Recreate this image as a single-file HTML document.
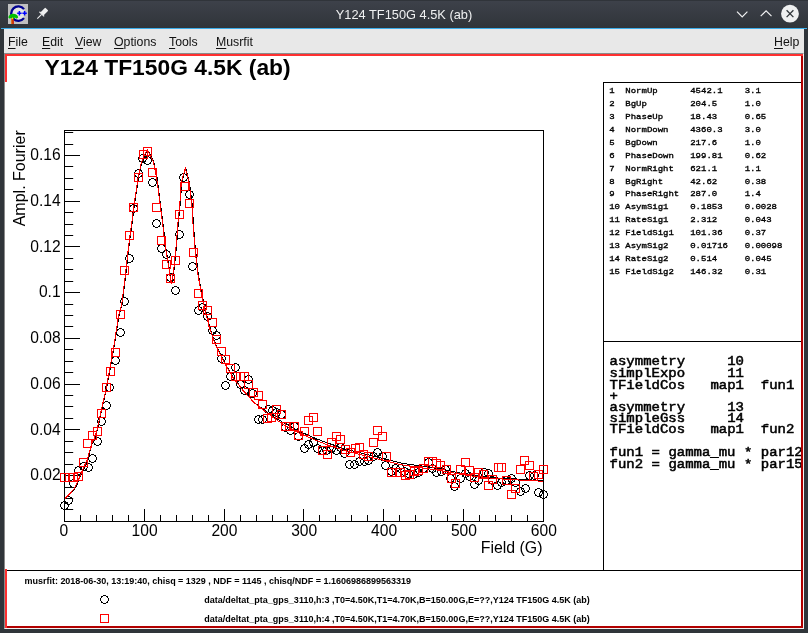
<!DOCTYPE html>
<html lang="en"><head><meta charset="utf-8"><title>Y124 TF150G 4.5K (ab)</title>
<style>
html,body{margin:0;padding:0;}
body{width:808px;height:633px;overflow:hidden;background:#30353a;position:relative;font-family:"Liberation Sans",sans-serif;}
.abs{position:absolute;}
#titlebar{left:0;top:0;width:808px;height:28px;background:linear-gradient(#30343a 0,#30343a 1px,#3d414a 1px,#30353a 27px);}
#titleline{left:1px;top:28px;width:806px;height:1px;background:#3daee9;}
#wtitle{will-change:transform;left:0;top:7px;width:808px;text-align:center;color:#eff0f1;font-size:12.8px;line-height:16px;white-space:nowrap;}
#menubar{left:4px;top:29px;width:800px;height:24px;background:#e8e8e8;}
.mi{will-change:transform;position:absolute;top:34.6px;font-size:12.3px;line-height:14px;color:#111;white-space:nowrap;}
.mi u{text-decoration:underline;text-underline-offset:1.5px;}
#frame{left:4px;top:53px;width:800px;height:576px;background:#fff;box-sizing:border-box;border-left:1px solid #8a8a8a;border-top:1px solid #8a8a8a;border-right:1px solid #f4f4f4;border-bottom:1px solid #f4f4f4;}
.mono{font-family:"Liberation Mono",monospace;font-weight:bold;white-space:pre;color:#000;}
</style></head>
<body>
<div id="titlebar" class="abs"></div><div id="titleline" class="abs"></div>
<div id="wtitle" class="abs">Y124 TF150G 4.5K (ab)</div>
<div id="menubar" class="abs"></div>
<div class="mi" style="left:8.4px"><u>F</u>ile</div><div class="mi" style="left:41.8px"><u>E</u>dit</div><div class="mi" style="left:74.8px"><u>V</u>iew</div><div class="mi" style="left:114.3px"><u>O</u>ptions</div><div class="mi" style="left:168.7px"><u>T</u>ools</div><div class="mi" style="left:215.5px"><u>M</u>usrfit</div><div class="mi" style="left:774.1px"><u>H</u>elp</div>
<div id="frame" class="abs"></div>
<svg class="abs" style="left:0;top:0;will-change:transform" width="808" height="633" viewBox="0 0 808 633" font-family="Liberation Sans, sans-serif">
<rect x="8" y="4" width="20" height="20" fill="#c0c0c0"/>
<circle cx="18.3" cy="13.6" r="6.4" fill="#e4e4e4"/>
<path d="M24 9.1A7.2 7.2 0 1 0 24 18.1" fill="none" stroke="#000090" stroke-width="2.3"/>
<path d="M17.2 13.3h4.4M19.4 11.1v4.4M22.4 13.3h4.4M24.6 11.1v4.4" stroke="#0000ff" stroke-width="1.5" fill="none"/>
<path d="M11.2 18.5h2.2l0.3 5.5h-2.5z" fill="#e06000"/>
<path d="M12.6 18.5h0.9l0.2 5.5h-1.1z" fill="#c00000"/>
<path d="M8.3 17.6c0.3-2.4 2.3-3.8 4.9-3.8c2.6 0 4.7 1.3 5 3.6l-1.6 1.3l-1.7-1.2l-1.6 1.4l-1.8-1.3l-1.6 1.2z" fill="#00c000"/>
<circle cx="12.4" cy="18.4" r="0.8" fill="#ffe000"/>
<g fill="#eff0f1" stroke="none"><rect x="-2.4" y="-6" width="4.8" height="7.4" rx="1" transform="translate(42.9,13.0) rotate(45) scale(0.92)"/><rect x="-3.6" y="1" width="7.2" height="1.3" transform="translate(42.9,13.0) rotate(45) scale(0.92)"/><rect x="-0.6" y="2" width="1.2" height="6.6" transform="translate(42.9,13.0) rotate(45) scale(0.92)"/></g>
<path d="M737 11.6l5.2 5.4l5.2-5.4M760.7 16.2l5.4-5.4l5.4 5.4" fill="none" stroke="#eff0f1" stroke-width="1.2"/>
<circle cx="790" cy="13.7" r="8.9" fill="#eff0f1"/>
<path d="M786.6 10.3l6.8 6.8M793.4 10.3l-6.8 6.8" stroke="#31363b" stroke-width="1.3" fill="none"/>
<rect x="5" y="54" width="798" height="2" fill="#ff3030"/>
<rect x="5" y="54" width="2" height="28" fill="#ff3030"/>
<rect x="5" y="569" width="2" height="59" fill="#ff3030"/>
<rect x="801" y="56" width="2" height="572" fill="#b20000"/>
<rect x="7" y="626" width="796" height="2" fill="#b20000"/>
<g fill="#000">
<rect x="603" y="82" width="198" height="1"/>
<rect x="603" y="82" width="1" height="488"/>
<rect x="603" y="341" width="198" height="1"/>
<rect x="7" y="570" width="794" height="1"/>
</g>
<text x="44.6" y="74.7" font-size="22.8" font-weight="bold" fill="#000" textLength="246" lengthAdjust="spacing">Y124 TF150G 4.5K (ab)</text>
<rect x="64.5" y="130.5" width="479" height="391" fill="none" stroke="#000" stroke-width="1"/>
<path d="M64.50 521V509.00M80.50 521V515.00M96.50 521V515.00M112.50 521V515.00M128.50 521V515.00M144.50 521V509.00M160.50 521V515.00M176.50 521V515.00M192.50 521V515.00M208.50 521V515.00M224.50 521V509.00M240.50 521V515.00M256.50 521V515.00M272.50 521V515.00M287.50 521V515.00M303.50 521V509.00M319.50 521V515.00M335.50 521V515.00M351.50 521V515.00M367.50 521V515.00M383.50 521V509.00M399.50 521V515.00M415.50 521V515.00M431.50 521V515.00M447.50 521V515.00M463.50 521V509.00M479.50 521V515.00M495.50 521V515.00M511.50 521V515.00M527.50 521V515.00M543.50 521V509.00M64.5 509.50H73.20M64.5 498.50H73.20M64.5 487.50H73.20M64.5 475.50H80.00M64.5 464.50H73.20M64.5 452.50H73.20M64.5 441.50H73.20M64.5 429.50H80.00M64.5 418.50H73.20M64.5 406.50H73.20M64.5 395.50H73.20M64.5 384.50H80.00M64.5 372.50H73.20M64.5 361.50H73.20M64.5 349.50H73.20M64.5 338.50H80.00M64.5 326.50H73.20M64.5 315.50H73.20M64.5 304.50H73.20M64.5 292.50H80.00M64.5 281.50H73.20M64.5 269.50H73.20M64.5 258.50H73.20M64.5 246.50H80.00M64.5 235.50H73.20M64.5 224.50H73.20M64.5 212.50H73.20M64.5 201.50H80.00M64.5 189.50H73.20M64.5 178.50H73.20M64.5 166.50H73.20M64.5 155.50H80.00M64.5 144.50H73.20M64.5 132.50H73.20" stroke="#000" stroke-width="1" fill="none"/>
<g font-size="15.6" fill="#000">
<text x="63.8" y="535.6" text-anchor="middle">0</text>
<text x="144.6" y="535.6" text-anchor="middle">100</text>
<text x="224.4" y="535.6" text-anchor="middle">200</text>
<text x="304.2" y="535.6" text-anchor="middle">300</text>
<text x="384.1" y="535.6" text-anchor="middle">400</text>
<text x="463.9" y="535.6" text-anchor="middle">500</text>
<text x="543.8" y="535.6" text-anchor="middle">600</text>
<text x="60.6" y="480.3" text-anchor="end">0.02</text>
<text x="60.6" y="434.6" text-anchor="end">0.04</text>
<text x="60.6" y="388.8" text-anchor="end">0.06</text>
<text x="60.6" y="343.1" text-anchor="end">0.08</text>
<text x="60.6" y="297.4" text-anchor="end">0.1</text>
<text x="60.6" y="251.7" text-anchor="end">0.12</text>
<text x="60.6" y="206.0" text-anchor="end">0.14</text>
<text x="60.6" y="160.2" text-anchor="end">0.16</text>
<text x="542.5" y="552.6" text-anchor="end" font-size="15.9">Field (G)</text>
<text transform="translate(25.4,226.3) rotate(-90)" font-size="16">Ampl. Fourier</text>
</g>
<clipPath id="cpl"><rect x="65" y="131" width="479" height="390"/></clipPath>
<g fill="none" stroke-width="1">
<g fill="#000" stroke="none" shape-rendering="crispEdges">
<path transform="translate(64,505)" d="M-1 -4h3v1h-3zM-3 -3h2v1h-2zM2 -3h2v1h-2zM-3 -2h1v1h-1zM3 -2h1v1h-1zM-4 -1h1v3h-1zM4 -1h1v3h-1zM-3 2h1v1h-1zM3 2h1v1h-1zM-3 3h2v1h-2zM2 3h2v1h-2zM-1 4h3v1h-3z"/>
<path transform="translate(68,500)" d="M-1 -4h3v1h-3zM-3 -3h2v1h-2zM2 -3h2v1h-2zM-3 -2h1v1h-1zM3 -2h1v1h-1zM-4 -1h1v3h-1zM4 -1h1v3h-1zM-3 2h1v1h-1zM3 2h1v1h-1zM-3 3h2v1h-2zM2 3h2v1h-2zM-1 4h3v1h-3z"/>
<path transform="translate(73,483)" d="M-1 -4h3v1h-3zM-3 -3h2v1h-2zM2 -3h2v1h-2zM-3 -2h1v1h-1zM3 -2h1v1h-1zM-4 -1h1v3h-1zM4 -1h1v3h-1zM-3 2h1v1h-1zM3 2h1v1h-1zM-3 3h2v1h-2zM2 3h2v1h-2zM-1 4h3v1h-3z"/>
<path transform="translate(78,470)" d="M-1 -4h3v1h-3zM-3 -3h2v1h-2zM2 -3h2v1h-2zM-3 -2h1v1h-1zM3 -2h1v1h-1zM-4 -1h1v3h-1zM4 -1h1v3h-1zM-3 2h1v1h-1zM3 2h1v1h-1zM-3 3h2v1h-2zM2 3h2v1h-2zM-1 4h3v1h-3z"/>
<path transform="translate(83,466)" d="M-1 -4h3v1h-3zM-3 -3h2v1h-2zM2 -3h2v1h-2zM-3 -2h1v1h-1zM3 -2h1v1h-1zM-4 -1h1v3h-1zM4 -1h1v3h-1zM-3 2h1v1h-1zM3 2h1v1h-1zM-3 3h2v1h-2zM2 3h2v1h-2zM-1 4h3v1h-3z"/>
<path transform="translate(88,467)" d="M-1 -4h3v1h-3zM-3 -3h2v1h-2zM2 -3h2v1h-2zM-3 -2h1v1h-1zM3 -2h1v1h-1zM-4 -1h1v3h-1zM4 -1h1v3h-1zM-3 2h1v1h-1zM3 2h1v1h-1zM-3 3h2v1h-2zM2 3h2v1h-2zM-1 4h3v1h-3z"/>
<path transform="translate(92,458)" d="M-1 -4h3v1h-3zM-3 -3h2v1h-2zM2 -3h2v1h-2zM-3 -2h1v1h-1zM3 -2h1v1h-1zM-4 -1h1v3h-1zM4 -1h1v3h-1zM-3 2h1v1h-1zM3 2h1v1h-1zM-3 3h2v1h-2zM2 3h2v1h-2zM-1 4h3v1h-3z"/>
<path transform="translate(97,441)" d="M-1 -4h3v1h-3zM-3 -3h2v1h-2zM2 -3h2v1h-2zM-3 -2h1v1h-1zM3 -2h1v1h-1zM-4 -1h1v3h-1zM4 -1h1v3h-1zM-3 2h1v1h-1zM3 2h1v1h-1zM-3 3h2v1h-2zM2 3h2v1h-2zM-1 4h3v1h-3z"/>
<path transform="translate(101,421)" d="M-1 -4h3v1h-3zM-3 -3h2v1h-2zM2 -3h2v1h-2zM-3 -2h1v1h-1zM3 -2h1v1h-1zM-4 -1h1v3h-1zM4 -1h1v3h-1zM-3 2h1v1h-1zM3 2h1v1h-1zM-3 3h2v1h-2zM2 3h2v1h-2zM-1 4h3v1h-3z"/>
<path transform="translate(106,405)" d="M-1 -4h3v1h-3zM-3 -3h2v1h-2zM2 -3h2v1h-2zM-3 -2h1v1h-1zM3 -2h1v1h-1zM-4 -1h1v3h-1zM4 -1h1v3h-1zM-3 2h1v1h-1zM3 2h1v1h-1zM-3 3h2v1h-2zM2 3h2v1h-2zM-1 4h3v1h-3z"/>
<path transform="translate(109,387)" d="M-1 -4h3v1h-3zM-3 -3h2v1h-2zM2 -3h2v1h-2zM-3 -2h1v1h-1zM3 -2h1v1h-1zM-4 -1h1v3h-1zM4 -1h1v3h-1zM-3 2h1v1h-1zM3 2h1v1h-1zM-3 3h2v1h-2zM2 3h2v1h-2zM-1 4h3v1h-3z"/>
<path transform="translate(115,360)" d="M-1 -4h3v1h-3zM-3 -3h2v1h-2zM2 -3h2v1h-2zM-3 -2h1v1h-1zM3 -2h1v1h-1zM-4 -1h1v3h-1zM4 -1h1v3h-1zM-3 2h1v1h-1zM3 2h1v1h-1zM-3 3h2v1h-2zM2 3h2v1h-2zM-1 4h3v1h-3z"/>
<path transform="translate(120,332)" d="M-1 -4h3v1h-3zM-3 -3h2v1h-2zM2 -3h2v1h-2zM-3 -2h1v1h-1zM3 -2h1v1h-1zM-4 -1h1v3h-1zM4 -1h1v3h-1zM-3 2h1v1h-1zM3 2h1v1h-1zM-3 3h2v1h-2zM2 3h2v1h-2zM-1 4h3v1h-3z"/>
<path transform="translate(124,301)" d="M-1 -4h3v1h-3zM-3 -3h2v1h-2zM2 -3h2v1h-2zM-3 -2h1v1h-1zM3 -2h1v1h-1zM-4 -1h1v3h-1zM4 -1h1v3h-1zM-3 2h1v1h-1zM3 2h1v1h-1zM-3 3h2v1h-2zM2 3h2v1h-2zM-1 4h3v1h-3z"/>
<path transform="translate(129,258)" d="M-1 -4h3v1h-3zM-3 -3h2v1h-2zM2 -3h2v1h-2zM-3 -2h1v1h-1zM3 -2h1v1h-1zM-4 -1h1v3h-1zM4 -1h1v3h-1zM-3 2h1v1h-1zM3 2h1v1h-1zM-3 3h2v1h-2zM2 3h2v1h-2zM-1 4h3v1h-3z"/>
<path transform="translate(133,208)" d="M-1 -4h3v1h-3zM-3 -3h2v1h-2zM2 -3h2v1h-2zM-3 -2h1v1h-1zM3 -2h1v1h-1zM-4 -1h1v3h-1zM4 -1h1v3h-1zM-3 2h1v1h-1zM3 2h1v1h-1zM-3 3h2v1h-2zM2 3h2v1h-2zM-1 4h3v1h-3z"/>
<path transform="translate(138,173)" d="M-1 -4h3v1h-3zM-3 -3h2v1h-2zM2 -3h2v1h-2zM-3 -2h1v1h-1zM3 -2h1v1h-1zM-4 -1h1v3h-1zM4 -1h1v3h-1zM-3 2h1v1h-1zM3 2h1v1h-1zM-3 3h2v1h-2zM2 3h2v1h-2zM-1 4h3v1h-3z"/>
<path transform="translate(142,158)" d="M-1 -4h3v1h-3zM-3 -3h2v1h-2zM2 -3h2v1h-2zM-3 -2h1v1h-1zM3 -2h1v1h-1zM-4 -1h1v3h-1zM4 -1h1v3h-1zM-3 2h1v1h-1zM3 2h1v1h-1zM-3 3h2v1h-2zM2 3h2v1h-2zM-1 4h3v1h-3z"/>
<path transform="translate(147,160)" d="M-1 -4h3v1h-3zM-3 -3h2v1h-2zM2 -3h2v1h-2zM-3 -2h1v1h-1zM3 -2h1v1h-1zM-4 -1h1v3h-1zM4 -1h1v3h-1zM-3 2h1v1h-1zM3 2h1v1h-1zM-3 3h2v1h-2zM2 3h2v1h-2zM-1 4h3v1h-3z"/>
<path transform="translate(152,182)" d="M-1 -4h3v1h-3zM-3 -3h2v1h-2zM2 -3h2v1h-2zM-3 -2h1v1h-1zM3 -2h1v1h-1zM-4 -1h1v3h-1zM4 -1h1v3h-1zM-3 2h1v1h-1zM3 2h1v1h-1zM-3 3h2v1h-2zM2 3h2v1h-2zM-1 4h3v1h-3z"/>
<path transform="translate(156,223)" d="M-1 -4h3v1h-3zM-3 -3h2v1h-2zM2 -3h2v1h-2zM-3 -2h1v1h-1zM3 -2h1v1h-1zM-4 -1h1v3h-1zM4 -1h1v3h-1zM-3 2h1v1h-1zM3 2h1v1h-1zM-3 3h2v1h-2zM2 3h2v1h-2zM-1 4h3v1h-3z"/>
<path transform="translate(161,248)" d="M-1 -4h3v1h-3zM-3 -3h2v1h-2zM2 -3h2v1h-2zM-3 -2h1v1h-1zM3 -2h1v1h-1zM-4 -1h1v3h-1zM4 -1h1v3h-1zM-3 2h1v1h-1zM3 2h1v1h-1zM-3 3h2v1h-2zM2 3h2v1h-2zM-1 4h3v1h-3z"/>
<path transform="translate(166,254)" d="M-1 -4h3v1h-3zM-3 -3h2v1h-2zM2 -3h2v1h-2zM-3 -2h1v1h-1zM3 -2h1v1h-1zM-4 -1h1v3h-1zM4 -1h1v3h-1zM-3 2h1v1h-1zM3 2h1v1h-1zM-3 3h2v1h-2zM2 3h2v1h-2zM-1 4h3v1h-3z"/>
<path transform="translate(170,277)" d="M-1 -4h3v1h-3zM-3 -3h2v1h-2zM2 -3h2v1h-2zM-3 -2h1v1h-1zM3 -2h1v1h-1zM-4 -1h1v3h-1zM4 -1h1v3h-1zM-3 2h1v1h-1zM3 2h1v1h-1zM-3 3h2v1h-2zM2 3h2v1h-2zM-1 4h3v1h-3z"/>
<path transform="translate(175,290)" d="M-1 -4h3v1h-3zM-3 -3h2v1h-2zM2 -3h2v1h-2zM-3 -2h1v1h-1zM3 -2h1v1h-1zM-4 -1h1v3h-1zM4 -1h1v3h-1zM-3 2h1v1h-1zM3 2h1v1h-1zM-3 3h2v1h-2zM2 3h2v1h-2zM-1 4h3v1h-3z"/>
<path transform="translate(179,234)" d="M-1 -4h3v1h-3zM-3 -3h2v1h-2zM2 -3h2v1h-2zM-3 -2h1v1h-1zM3 -2h1v1h-1zM-4 -1h1v3h-1zM4 -1h1v3h-1zM-3 2h1v1h-1zM3 2h1v1h-1zM-3 3h2v1h-2zM2 3h2v1h-2zM-1 4h3v1h-3z"/>
<path transform="translate(183,177)" d="M-1 -4h3v1h-3zM-3 -3h2v1h-2zM2 -3h2v1h-2zM-3 -2h1v1h-1zM3 -2h1v1h-1zM-4 -1h1v3h-1zM4 -1h1v3h-1zM-3 2h1v1h-1zM3 2h1v1h-1zM-3 3h2v1h-2zM2 3h2v1h-2zM-1 4h3v1h-3z"/>
<path transform="translate(189,194)" d="M-1 -4h3v1h-3zM-3 -3h2v1h-2zM2 -3h2v1h-2zM-3 -2h1v1h-1zM3 -2h1v1h-1zM-4 -1h1v3h-1zM4 -1h1v3h-1zM-3 2h1v1h-1zM3 2h1v1h-1zM-3 3h2v1h-2zM2 3h2v1h-2zM-1 4h3v1h-3z"/>
<path transform="translate(192,266)" d="M-1 -4h3v1h-3zM-3 -3h2v1h-2zM2 -3h2v1h-2zM-3 -2h1v1h-1zM3 -2h1v1h-1zM-4 -1h1v3h-1zM4 -1h1v3h-1zM-3 2h1v1h-1zM3 2h1v1h-1zM-3 3h2v1h-2zM2 3h2v1h-2zM-1 4h3v1h-3z"/>
<path transform="translate(198,310)" d="M-1 -4h3v1h-3zM-3 -3h2v1h-2zM2 -3h2v1h-2zM-3 -2h1v1h-1zM3 -2h1v1h-1zM-4 -1h1v3h-1zM4 -1h1v3h-1zM-3 2h1v1h-1zM3 2h1v1h-1zM-3 3h2v1h-2zM2 3h2v1h-2zM-1 4h3v1h-3z"/>
<path transform="translate(202,307)" d="M-1 -4h3v1h-3zM-3 -3h2v1h-2zM2 -3h2v1h-2zM-3 -2h1v1h-1zM3 -2h1v1h-1zM-4 -1h1v3h-1zM4 -1h1v3h-1zM-3 2h1v1h-1zM3 2h1v1h-1zM-3 3h2v1h-2zM2 3h2v1h-2zM-1 4h3v1h-3z"/>
<path transform="translate(207,316)" d="M-1 -4h3v1h-3zM-3 -3h2v1h-2zM2 -3h2v1h-2zM-3 -2h1v1h-1zM3 -2h1v1h-1zM-4 -1h1v3h-1zM4 -1h1v3h-1zM-3 2h1v1h-1zM3 2h1v1h-1zM-3 3h2v1h-2zM2 3h2v1h-2zM-1 4h3v1h-3z"/>
<path transform="translate(212,330)" d="M-1 -4h3v1h-3zM-3 -3h2v1h-2zM2 -3h2v1h-2zM-3 -2h1v1h-1zM3 -2h1v1h-1zM-4 -1h1v3h-1zM4 -1h1v3h-1zM-3 2h1v1h-1zM3 2h1v1h-1zM-3 3h2v1h-2zM2 3h2v1h-2zM-1 4h3v1h-3z"/>
<path transform="translate(216,335)" d="M-1 -4h3v1h-3zM-3 -3h2v1h-2zM2 -3h2v1h-2zM-3 -2h1v1h-1zM3 -2h1v1h-1zM-4 -1h1v3h-1zM4 -1h1v3h-1zM-3 2h1v1h-1zM3 2h1v1h-1zM-3 3h2v1h-2zM2 3h2v1h-2zM-1 4h3v1h-3z"/>
<path transform="translate(221,358)" d="M-1 -4h3v1h-3zM-3 -3h2v1h-2zM2 -3h2v1h-2zM-3 -2h1v1h-1zM3 -2h1v1h-1zM-4 -1h1v3h-1zM4 -1h1v3h-1zM-3 2h1v1h-1zM3 2h1v1h-1zM-3 3h2v1h-2zM2 3h2v1h-2zM-1 4h3v1h-3z"/>
<path transform="translate(225,385)" d="M-1 -4h3v1h-3zM-3 -3h2v1h-2zM2 -3h2v1h-2zM-3 -2h1v1h-1zM3 -2h1v1h-1zM-4 -1h1v3h-1zM4 -1h1v3h-1zM-3 2h1v1h-1zM3 2h1v1h-1zM-3 3h2v1h-2zM2 3h2v1h-2zM-1 4h3v1h-3z"/>
<path transform="translate(230,376)" d="M-1 -4h3v1h-3zM-3 -3h2v1h-2zM2 -3h2v1h-2zM-3 -2h1v1h-1zM3 -2h1v1h-1zM-4 -1h1v3h-1zM4 -1h1v3h-1zM-3 2h1v1h-1zM3 2h1v1h-1zM-3 3h2v1h-2zM2 3h2v1h-2zM-1 4h3v1h-3z"/>
<path transform="translate(235,367)" d="M-1 -4h3v1h-3zM-3 -3h2v1h-2zM2 -3h2v1h-2zM-3 -2h1v1h-1zM3 -2h1v1h-1zM-4 -1h1v3h-1zM4 -1h1v3h-1zM-3 2h1v1h-1zM3 2h1v1h-1zM-3 3h2v1h-2zM2 3h2v1h-2zM-1 4h3v1h-3z"/>
<path transform="translate(240,384)" d="M-1 -4h3v1h-3zM-3 -3h2v1h-2zM2 -3h2v1h-2zM-3 -2h1v1h-1zM3 -2h1v1h-1zM-4 -1h1v3h-1zM4 -1h1v3h-1zM-3 2h1v1h-1zM3 2h1v1h-1zM-3 3h2v1h-2zM2 3h2v1h-2zM-1 4h3v1h-3z"/>
<path transform="translate(244,390)" d="M-1 -4h3v1h-3zM-3 -3h2v1h-2zM2 -3h2v1h-2zM-3 -2h1v1h-1zM3 -2h1v1h-1zM-4 -1h1v3h-1zM4 -1h1v3h-1zM-3 2h1v1h-1zM3 2h1v1h-1zM-3 3h2v1h-2zM2 3h2v1h-2zM-1 4h3v1h-3z"/>
<path transform="translate(248,379)" d="M-1 -4h3v1h-3zM-3 -3h2v1h-2zM2 -3h2v1h-2zM-3 -2h1v1h-1zM3 -2h1v1h-1zM-4 -1h1v3h-1zM4 -1h1v3h-1zM-3 2h1v1h-1zM3 2h1v1h-1zM-3 3h2v1h-2zM2 3h2v1h-2zM-1 4h3v1h-3z"/>
<path transform="translate(252,393)" d="M-1 -4h3v1h-3zM-3 -3h2v1h-2zM2 -3h2v1h-2zM-3 -2h1v1h-1zM3 -2h1v1h-1zM-4 -1h1v3h-1zM4 -1h1v3h-1zM-3 2h1v1h-1zM3 2h1v1h-1zM-3 3h2v1h-2zM2 3h2v1h-2zM-1 4h3v1h-3z"/>
<path transform="translate(258,419)" d="M-1 -4h3v1h-3zM-3 -3h2v1h-2zM2 -3h2v1h-2zM-3 -2h1v1h-1zM3 -2h1v1h-1zM-4 -1h1v3h-1zM4 -1h1v3h-1zM-3 2h1v1h-1zM3 2h1v1h-1zM-3 3h2v1h-2zM2 3h2v1h-2zM-1 4h3v1h-3z"/>
<path transform="translate(262,419)" d="M-1 -4h3v1h-3zM-3 -3h2v1h-2zM2 -3h2v1h-2zM-3 -2h1v1h-1zM3 -2h1v1h-1zM-4 -1h1v3h-1zM4 -1h1v3h-1zM-3 2h1v1h-1zM3 2h1v1h-1zM-3 3h2v1h-2zM2 3h2v1h-2zM-1 4h3v1h-3z"/>
<path transform="translate(268,409)" d="M-1 -4h3v1h-3zM-3 -3h2v1h-2zM2 -3h2v1h-2zM-3 -2h1v1h-1zM3 -2h1v1h-1zM-4 -1h1v3h-1zM4 -1h1v3h-1zM-3 2h1v1h-1zM3 2h1v1h-1zM-3 3h2v1h-2zM2 3h2v1h-2zM-1 4h3v1h-3z"/>
<path transform="translate(272,410)" d="M-1 -4h3v1h-3zM-3 -3h2v1h-2zM2 -3h2v1h-2zM-3 -2h1v1h-1zM3 -2h1v1h-1zM-4 -1h1v3h-1zM4 -1h1v3h-1zM-3 2h1v1h-1zM3 2h1v1h-1zM-3 3h2v1h-2zM2 3h2v1h-2zM-1 4h3v1h-3z"/>
<path transform="translate(276,412)" d="M-1 -4h3v1h-3zM-3 -3h2v1h-2zM2 -3h2v1h-2zM-3 -2h1v1h-1zM3 -2h1v1h-1zM-4 -1h1v3h-1zM4 -1h1v3h-1zM-3 2h1v1h-1zM3 2h1v1h-1zM-3 3h2v1h-2zM2 3h2v1h-2zM-1 4h3v1h-3z"/>
<path transform="translate(281,414)" d="M-1 -4h3v1h-3zM-3 -3h2v1h-2zM2 -3h2v1h-2zM-3 -2h1v1h-1zM3 -2h1v1h-1zM-4 -1h1v3h-1zM4 -1h1v3h-1zM-3 2h1v1h-1zM3 2h1v1h-1zM-3 3h2v1h-2zM2 3h2v1h-2zM-1 4h3v1h-3z"/>
<path transform="translate(285,427)" d="M-1 -4h3v1h-3zM-3 -3h2v1h-2zM2 -3h2v1h-2zM-3 -2h1v1h-1zM3 -2h1v1h-1zM-4 -1h1v3h-1zM4 -1h1v3h-1zM-3 2h1v1h-1zM3 2h1v1h-1zM-3 3h2v1h-2zM2 3h2v1h-2zM-1 4h3v1h-3z"/>
<path transform="translate(290,430)" d="M-1 -4h3v1h-3zM-3 -3h2v1h-2zM2 -3h2v1h-2zM-3 -2h1v1h-1zM3 -2h1v1h-1zM-4 -1h1v3h-1zM4 -1h1v3h-1zM-3 2h1v1h-1zM3 2h1v1h-1zM-3 3h2v1h-2zM2 3h2v1h-2zM-1 4h3v1h-3z"/>
<path transform="translate(294,426)" d="M-1 -4h3v1h-3zM-3 -3h2v1h-2zM2 -3h2v1h-2zM-3 -2h1v1h-1zM3 -2h1v1h-1zM-4 -1h1v3h-1zM4 -1h1v3h-1zM-3 2h1v1h-1zM3 2h1v1h-1zM-3 3h2v1h-2zM2 3h2v1h-2zM-1 4h3v1h-3z"/>
<path transform="translate(298,436)" d="M-1 -4h3v1h-3zM-3 -3h2v1h-2zM2 -3h2v1h-2zM-3 -2h1v1h-1zM3 -2h1v1h-1zM-4 -1h1v3h-1zM4 -1h1v3h-1zM-3 2h1v1h-1zM3 2h1v1h-1zM-3 3h2v1h-2zM2 3h2v1h-2zM-1 4h3v1h-3z"/>
<path transform="translate(304,448)" d="M-1 -4h3v1h-3zM-3 -3h2v1h-2zM2 -3h2v1h-2zM-3 -2h1v1h-1zM3 -2h1v1h-1zM-4 -1h1v3h-1zM4 -1h1v3h-1zM-3 2h1v1h-1zM3 2h1v1h-1zM-3 3h2v1h-2zM2 3h2v1h-2zM-1 4h3v1h-3z"/>
<path transform="translate(308,444)" d="M-1 -4h3v1h-3zM-3 -3h2v1h-2zM2 -3h2v1h-2zM-3 -2h1v1h-1zM3 -2h1v1h-1zM-4 -1h1v3h-1zM4 -1h1v3h-1zM-3 2h1v1h-1zM3 2h1v1h-1zM-3 3h2v1h-2zM2 3h2v1h-2zM-1 4h3v1h-3z"/>
<path transform="translate(313,442)" d="M-1 -4h3v1h-3zM-3 -3h2v1h-2zM2 -3h2v1h-2zM-3 -2h1v1h-1zM3 -2h1v1h-1zM-4 -1h1v3h-1zM4 -1h1v3h-1zM-3 2h1v1h-1zM3 2h1v1h-1zM-3 3h2v1h-2zM2 3h2v1h-2zM-1 4h3v1h-3z"/>
<path transform="translate(317,448)" d="M-1 -4h3v1h-3zM-3 -3h2v1h-2zM2 -3h2v1h-2zM-3 -2h1v1h-1zM3 -2h1v1h-1zM-4 -1h1v3h-1zM4 -1h1v3h-1zM-3 2h1v1h-1zM3 2h1v1h-1zM-3 3h2v1h-2zM2 3h2v1h-2zM-1 4h3v1h-3z"/>
<path transform="translate(322,450)" d="M-1 -4h3v1h-3zM-3 -3h2v1h-2zM2 -3h2v1h-2zM-3 -2h1v1h-1zM3 -2h1v1h-1zM-4 -1h1v3h-1zM4 -1h1v3h-1zM-3 2h1v1h-1zM3 2h1v1h-1zM-3 3h2v1h-2zM2 3h2v1h-2zM-1 4h3v1h-3z"/>
<path transform="translate(326,450)" d="M-1 -4h3v1h-3zM-3 -3h2v1h-2zM2 -3h2v1h-2zM-3 -2h1v1h-1zM3 -2h1v1h-1zM-4 -1h1v3h-1zM4 -1h1v3h-1zM-3 2h1v1h-1zM3 2h1v1h-1zM-3 3h2v1h-2zM2 3h2v1h-2zM-1 4h3v1h-3z"/>
<path transform="translate(331,448)" d="M-1 -4h3v1h-3zM-3 -3h2v1h-2zM2 -3h2v1h-2zM-3 -2h1v1h-1zM3 -2h1v1h-1zM-4 -1h1v3h-1zM4 -1h1v3h-1zM-3 2h1v1h-1zM3 2h1v1h-1zM-3 3h2v1h-2zM2 3h2v1h-2zM-1 4h3v1h-3z"/>
<path transform="translate(336,450)" d="M-1 -4h3v1h-3zM-3 -3h2v1h-2zM2 -3h2v1h-2zM-3 -2h1v1h-1zM3 -2h1v1h-1zM-4 -1h1v3h-1zM4 -1h1v3h-1zM-3 2h1v1h-1zM3 2h1v1h-1zM-3 3h2v1h-2zM2 3h2v1h-2zM-1 4h3v1h-3z"/>
<path transform="translate(340,447)" d="M-1 -4h3v1h-3zM-3 -3h2v1h-2zM2 -3h2v1h-2zM-3 -2h1v1h-1zM3 -2h1v1h-1zM-4 -1h1v3h-1zM4 -1h1v3h-1zM-3 2h1v1h-1zM3 2h1v1h-1zM-3 3h2v1h-2zM2 3h2v1h-2zM-1 4h3v1h-3z"/>
<path transform="translate(344,453)" d="M-1 -4h3v1h-3zM-3 -3h2v1h-2zM2 -3h2v1h-2zM-3 -2h1v1h-1zM3 -2h1v1h-1zM-4 -1h1v3h-1zM4 -1h1v3h-1zM-3 2h1v1h-1zM3 2h1v1h-1zM-3 3h2v1h-2zM2 3h2v1h-2zM-1 4h3v1h-3z"/>
<path transform="translate(349,464)" d="M-1 -4h3v1h-3zM-3 -3h2v1h-2zM2 -3h2v1h-2zM-3 -2h1v1h-1zM3 -2h1v1h-1zM-4 -1h1v3h-1zM4 -1h1v3h-1zM-3 2h1v1h-1zM3 2h1v1h-1zM-3 3h2v1h-2zM2 3h2v1h-2zM-1 4h3v1h-3z"/>
<path transform="translate(354,464)" d="M-1 -4h3v1h-3zM-3 -3h2v1h-2zM2 -3h2v1h-2zM-3 -2h1v1h-1zM3 -2h1v1h-1zM-4 -1h1v3h-1zM4 -1h1v3h-1zM-3 2h1v1h-1zM3 2h1v1h-1zM-3 3h2v1h-2zM2 3h2v1h-2zM-1 4h3v1h-3z"/>
<path transform="translate(359,461)" d="M-1 -4h3v1h-3zM-3 -3h2v1h-2zM2 -3h2v1h-2zM-3 -2h1v1h-1zM3 -2h1v1h-1zM-4 -1h1v3h-1zM4 -1h1v3h-1zM-3 2h1v1h-1zM3 2h1v1h-1zM-3 3h2v1h-2zM2 3h2v1h-2zM-1 4h3v1h-3z"/>
<path transform="translate(364,461)" d="M-1 -4h3v1h-3zM-3 -3h2v1h-2zM2 -3h2v1h-2zM-3 -2h1v1h-1zM3 -2h1v1h-1zM-4 -1h1v3h-1zM4 -1h1v3h-1zM-3 2h1v1h-1zM3 2h1v1h-1zM-3 3h2v1h-2zM2 3h2v1h-2zM-1 4h3v1h-3z"/>
<path transform="translate(368,460)" d="M-1 -4h3v1h-3zM-3 -3h2v1h-2zM2 -3h2v1h-2zM-3 -2h1v1h-1zM3 -2h1v1h-1zM-4 -1h1v3h-1zM4 -1h1v3h-1zM-3 2h1v1h-1zM3 2h1v1h-1zM-3 3h2v1h-2zM2 3h2v1h-2zM-1 4h3v1h-3z"/>
<path transform="translate(373,456)" d="M-1 -4h3v1h-3zM-3 -3h2v1h-2zM2 -3h2v1h-2zM-3 -2h1v1h-1zM3 -2h1v1h-1zM-4 -1h1v3h-1zM4 -1h1v3h-1zM-3 2h1v1h-1zM3 2h1v1h-1zM-3 3h2v1h-2zM2 3h2v1h-2zM-1 4h3v1h-3z"/>
<path transform="translate(377,452)" d="M-1 -4h3v1h-3zM-3 -3h2v1h-2zM2 -3h2v1h-2zM-3 -2h1v1h-1zM3 -2h1v1h-1zM-4 -1h1v3h-1zM4 -1h1v3h-1zM-3 2h1v1h-1zM3 2h1v1h-1zM-3 3h2v1h-2zM2 3h2v1h-2zM-1 4h3v1h-3z"/>
<path transform="translate(382,456)" d="M-1 -4h3v1h-3zM-3 -3h2v1h-2zM2 -3h2v1h-2zM-3 -2h1v1h-1zM3 -2h1v1h-1zM-4 -1h1v3h-1zM4 -1h1v3h-1zM-3 2h1v1h-1zM3 2h1v1h-1zM-3 3h2v1h-2zM2 3h2v1h-2zM-1 4h3v1h-3z"/>
<path transform="translate(385,465)" d="M-1 -4h3v1h-3zM-3 -3h2v1h-2zM2 -3h2v1h-2zM-3 -2h1v1h-1zM3 -2h1v1h-1zM-4 -1h1v3h-1zM4 -1h1v3h-1zM-3 2h1v1h-1zM3 2h1v1h-1zM-3 3h2v1h-2zM2 3h2v1h-2zM-1 4h3v1h-3z"/>
<path transform="translate(391,471)" d="M-1 -4h3v1h-3zM-3 -3h2v1h-2zM2 -3h2v1h-2zM-3 -2h1v1h-1zM3 -2h1v1h-1zM-4 -1h1v3h-1zM4 -1h1v3h-1zM-3 2h1v1h-1zM3 2h1v1h-1zM-3 3h2v1h-2zM2 3h2v1h-2zM-1 4h3v1h-3z"/>
<path transform="translate(395,468)" d="M-1 -4h3v1h-3zM-3 -3h2v1h-2zM2 -3h2v1h-2zM-3 -2h1v1h-1zM3 -2h1v1h-1zM-4 -1h1v3h-1zM4 -1h1v3h-1zM-3 2h1v1h-1zM3 2h1v1h-1zM-3 3h2v1h-2zM2 3h2v1h-2zM-1 4h3v1h-3z"/>
<path transform="translate(400,468)" d="M-1 -4h3v1h-3zM-3 -3h2v1h-2zM2 -3h2v1h-2zM-3 -2h1v1h-1zM3 -2h1v1h-1zM-4 -1h1v3h-1zM4 -1h1v3h-1zM-3 2h1v1h-1zM3 2h1v1h-1zM-3 3h2v1h-2zM2 3h2v1h-2zM-1 4h3v1h-3z"/>
<path transform="translate(404,471)" d="M-1 -4h3v1h-3zM-3 -3h2v1h-2zM2 -3h2v1h-2zM-3 -2h1v1h-1zM3 -2h1v1h-1zM-4 -1h1v3h-1zM4 -1h1v3h-1zM-3 2h1v1h-1zM3 2h1v1h-1zM-3 3h2v1h-2zM2 3h2v1h-2zM-1 4h3v1h-3z"/>
<path transform="translate(408,473)" d="M-1 -4h3v1h-3zM-3 -3h2v1h-2zM2 -3h2v1h-2zM-3 -2h1v1h-1zM3 -2h1v1h-1zM-4 -1h1v3h-1zM4 -1h1v3h-1zM-3 2h1v1h-1zM3 2h1v1h-1zM-3 3h2v1h-2zM2 3h2v1h-2zM-1 4h3v1h-3z"/>
<path transform="translate(413,474)" d="M-1 -4h3v1h-3zM-3 -3h2v1h-2zM2 -3h2v1h-2zM-3 -2h1v1h-1zM3 -2h1v1h-1zM-4 -1h1v3h-1zM4 -1h1v3h-1zM-3 2h1v1h-1zM3 2h1v1h-1zM-3 3h2v1h-2zM2 3h2v1h-2zM-1 4h3v1h-3z"/>
<path transform="translate(418,472)" d="M-1 -4h3v1h-3zM-3 -3h2v1h-2zM2 -3h2v1h-2zM-3 -2h1v1h-1zM3 -2h1v1h-1zM-4 -1h1v3h-1zM4 -1h1v3h-1zM-3 2h1v1h-1zM3 2h1v1h-1zM-3 3h2v1h-2zM2 3h2v1h-2zM-1 4h3v1h-3z"/>
<path transform="translate(423,468)" d="M-1 -4h3v1h-3zM-3 -3h2v1h-2zM2 -3h2v1h-2zM-3 -2h1v1h-1zM3 -2h1v1h-1zM-4 -1h1v3h-1zM4 -1h1v3h-1zM-3 2h1v1h-1zM3 2h1v1h-1zM-3 3h2v1h-2zM2 3h2v1h-2zM-1 4h3v1h-3z"/>
<path transform="translate(428,462)" d="M-1 -4h3v1h-3zM-3 -3h2v1h-2zM2 -3h2v1h-2zM-3 -2h1v1h-1zM3 -2h1v1h-1zM-4 -1h1v3h-1zM4 -1h1v3h-1zM-3 2h1v1h-1zM3 2h1v1h-1zM-3 3h2v1h-2zM2 3h2v1h-2zM-1 4h3v1h-3z"/>
<path transform="translate(432,468)" d="M-1 -4h3v1h-3zM-3 -3h2v1h-2zM2 -3h2v1h-2zM-3 -2h1v1h-1zM3 -2h1v1h-1zM-4 -1h1v3h-1zM4 -1h1v3h-1zM-3 2h1v1h-1zM3 2h1v1h-1zM-3 3h2v1h-2zM2 3h2v1h-2zM-1 4h3v1h-3z"/>
<path transform="translate(436,472)" d="M-1 -4h3v1h-3zM-3 -3h2v1h-2zM2 -3h2v1h-2zM-3 -2h1v1h-1zM3 -2h1v1h-1zM-4 -1h1v3h-1zM4 -1h1v3h-1zM-3 2h1v1h-1zM3 2h1v1h-1zM-3 3h2v1h-2zM2 3h2v1h-2zM-1 4h3v1h-3z"/>
<path transform="translate(441,471)" d="M-1 -4h3v1h-3zM-3 -3h2v1h-2zM2 -3h2v1h-2zM-3 -2h1v1h-1zM3 -2h1v1h-1zM-4 -1h1v3h-1zM4 -1h1v3h-1zM-3 2h1v1h-1zM3 2h1v1h-1zM-3 3h2v1h-2zM2 3h2v1h-2zM-1 4h3v1h-3z"/>
<path transform="translate(445,469)" d="M-1 -4h3v1h-3zM-3 -3h2v1h-2zM2 -3h2v1h-2zM-3 -2h1v1h-1zM3 -2h1v1h-1zM-4 -1h1v3h-1zM4 -1h1v3h-1zM-3 2h1v1h-1zM3 2h1v1h-1zM-3 3h2v1h-2zM2 3h2v1h-2zM-1 4h3v1h-3z"/>
<path transform="translate(450,478)" d="M-1 -4h3v1h-3zM-3 -3h2v1h-2zM2 -3h2v1h-2zM-3 -2h1v1h-1zM3 -2h1v1h-1zM-4 -1h1v3h-1zM4 -1h1v3h-1zM-3 2h1v1h-1zM3 2h1v1h-1zM-3 3h2v1h-2zM2 3h2v1h-2zM-1 4h3v1h-3z"/>
<path transform="translate(454,486)" d="M-1 -4h3v1h-3zM-3 -3h2v1h-2zM2 -3h2v1h-2zM-3 -2h1v1h-1zM3 -2h1v1h-1zM-4 -1h1v3h-1zM4 -1h1v3h-1zM-3 2h1v1h-1zM3 2h1v1h-1zM-3 3h2v1h-2zM2 3h2v1h-2zM-1 4h3v1h-3z"/>
<path transform="translate(460,478)" d="M-1 -4h3v1h-3zM-3 -3h2v1h-2zM2 -3h2v1h-2zM-3 -2h1v1h-1zM3 -2h1v1h-1zM-4 -1h1v3h-1zM4 -1h1v3h-1zM-3 2h1v1h-1zM3 2h1v1h-1zM-3 3h2v1h-2zM2 3h2v1h-2zM-1 4h3v1h-3z"/>
<path transform="translate(465,473)" d="M-1 -4h3v1h-3zM-3 -3h2v1h-2zM2 -3h2v1h-2zM-3 -2h1v1h-1zM3 -2h1v1h-1zM-4 -1h1v3h-1zM4 -1h1v3h-1zM-3 2h1v1h-1zM3 2h1v1h-1zM-3 3h2v1h-2zM2 3h2v1h-2zM-1 4h3v1h-3z"/>
<path transform="translate(469,476)" d="M-1 -4h3v1h-3zM-3 -3h2v1h-2zM2 -3h2v1h-2zM-3 -2h1v1h-1zM3 -2h1v1h-1zM-4 -1h1v3h-1zM4 -1h1v3h-1zM-3 2h1v1h-1zM3 2h1v1h-1zM-3 3h2v1h-2zM2 3h2v1h-2zM-1 4h3v1h-3z"/>
<path transform="translate(474,484)" d="M-1 -4h3v1h-3zM-3 -3h2v1h-2zM2 -3h2v1h-2zM-3 -2h1v1h-1zM3 -2h1v1h-1zM-4 -1h1v3h-1zM4 -1h1v3h-1zM-3 2h1v1h-1zM3 2h1v1h-1zM-3 3h2v1h-2zM2 3h2v1h-2zM-1 4h3v1h-3z"/>
<path transform="translate(478,480)" d="M-1 -4h3v1h-3zM-3 -3h2v1h-2zM2 -3h2v1h-2zM-3 -2h1v1h-1zM3 -2h1v1h-1zM-4 -1h1v3h-1zM4 -1h1v3h-1zM-3 2h1v1h-1zM3 2h1v1h-1zM-3 3h2v1h-2zM2 3h2v1h-2zM-1 4h3v1h-3z"/>
<path transform="translate(484,472)" d="M-1 -4h3v1h-3zM-3 -3h2v1h-2zM2 -3h2v1h-2zM-3 -2h1v1h-1zM3 -2h1v1h-1zM-4 -1h1v3h-1zM4 -1h1v3h-1zM-3 2h1v1h-1zM3 2h1v1h-1zM-3 3h2v1h-2zM2 3h2v1h-2zM-1 4h3v1h-3z"/>
<path transform="translate(488,473)" d="M-1 -4h3v1h-3zM-3 -3h2v1h-2zM2 -3h2v1h-2zM-3 -2h1v1h-1zM3 -2h1v1h-1zM-4 -1h1v3h-1zM4 -1h1v3h-1zM-3 2h1v1h-1zM3 2h1v1h-1zM-3 3h2v1h-2zM2 3h2v1h-2zM-1 4h3v1h-3z"/>
<path transform="translate(492,480)" d="M-1 -4h3v1h-3zM-3 -3h2v1h-2zM2 -3h2v1h-2zM-3 -2h1v1h-1zM3 -2h1v1h-1zM-4 -1h1v3h-1zM4 -1h1v3h-1zM-3 2h1v1h-1zM3 2h1v1h-1zM-3 3h2v1h-2zM2 3h2v1h-2zM-1 4h3v1h-3z"/>
<path transform="translate(497,485)" d="M-1 -4h3v1h-3zM-3 -3h2v1h-2zM2 -3h2v1h-2zM-3 -2h1v1h-1zM3 -2h1v1h-1zM-4 -1h1v3h-1zM4 -1h1v3h-1zM-3 2h1v1h-1zM3 2h1v1h-1zM-3 3h2v1h-2zM2 3h2v1h-2zM-1 4h3v1h-3z"/>
<path transform="translate(501,482)" d="M-1 -4h3v1h-3zM-3 -3h2v1h-2zM2 -3h2v1h-2zM-3 -2h1v1h-1zM3 -2h1v1h-1zM-4 -1h1v3h-1zM4 -1h1v3h-1zM-3 2h1v1h-1zM3 2h1v1h-1zM-3 3h2v1h-2zM2 3h2v1h-2zM-1 4h3v1h-3z"/>
<path transform="translate(506,480)" d="M-1 -4h3v1h-3zM-3 -3h2v1h-2zM2 -3h2v1h-2zM-3 -2h1v1h-1zM3 -2h1v1h-1zM-4 -1h1v3h-1zM4 -1h1v3h-1zM-3 2h1v1h-1zM3 2h1v1h-1zM-3 3h2v1h-2zM2 3h2v1h-2zM-1 4h3v1h-3z"/>
<path transform="translate(511,478)" d="M-1 -4h3v1h-3zM-3 -3h2v1h-2zM2 -3h2v1h-2zM-3 -2h1v1h-1zM3 -2h1v1h-1zM-4 -1h1v3h-1zM4 -1h1v3h-1zM-3 2h1v1h-1zM3 2h1v1h-1zM-3 3h2v1h-2zM2 3h2v1h-2zM-1 4h3v1h-3z"/>
<path transform="translate(515,482)" d="M-1 -4h3v1h-3zM-3 -3h2v1h-2zM2 -3h2v1h-2zM-3 -2h1v1h-1zM3 -2h1v1h-1zM-4 -1h1v3h-1zM4 -1h1v3h-1zM-3 2h1v1h-1zM3 2h1v1h-1zM-3 3h2v1h-2zM2 3h2v1h-2zM-1 4h3v1h-3z"/>
<path transform="translate(520,491)" d="M-1 -4h3v1h-3zM-3 -3h2v1h-2zM2 -3h2v1h-2zM-3 -2h1v1h-1zM3 -2h1v1h-1zM-4 -1h1v3h-1zM4 -1h1v3h-1zM-3 2h1v1h-1zM3 2h1v1h-1zM-3 3h2v1h-2zM2 3h2v1h-2zM-1 4h3v1h-3z"/>
<path transform="translate(525,488)" d="M-1 -4h3v1h-3zM-3 -3h2v1h-2zM2 -3h2v1h-2zM-3 -2h1v1h-1zM3 -2h1v1h-1zM-4 -1h1v3h-1zM4 -1h1v3h-1zM-3 2h1v1h-1zM3 2h1v1h-1zM-3 3h2v1h-2zM2 3h2v1h-2zM-1 4h3v1h-3z"/>
<path transform="translate(529,475)" d="M-1 -4h3v1h-3zM-3 -3h2v1h-2zM2 -3h2v1h-2zM-3 -2h1v1h-1zM3 -2h1v1h-1zM-4 -1h1v3h-1zM4 -1h1v3h-1zM-3 2h1v1h-1zM3 2h1v1h-1zM-3 3h2v1h-2zM2 3h2v1h-2zM-1 4h3v1h-3z"/>
<path transform="translate(534,475)" d="M-1 -4h3v1h-3zM-3 -3h2v1h-2zM2 -3h2v1h-2zM-3 -2h1v1h-1zM3 -2h1v1h-1zM-4 -1h1v3h-1zM4 -1h1v3h-1zM-3 2h1v1h-1zM3 2h1v1h-1zM-3 3h2v1h-2zM2 3h2v1h-2zM-1 4h3v1h-3z"/>
<path transform="translate(538,492)" d="M-1 -4h3v1h-3zM-3 -3h2v1h-2zM2 -3h2v1h-2zM-3 -2h1v1h-1zM3 -2h1v1h-1zM-4 -1h1v3h-1zM4 -1h1v3h-1zM-3 2h1v1h-1zM3 2h1v1h-1zM-3 3h2v1h-2zM2 3h2v1h-2zM-1 4h3v1h-3z"/>
<path transform="translate(543,494)" d="M-1 -4h3v1h-3zM-3 -3h2v1h-2zM2 -3h2v1h-2zM-3 -2h1v1h-1zM3 -2h1v1h-1zM-4 -1h1v3h-1zM4 -1h1v3h-1zM-3 2h1v1h-1zM3 2h1v1h-1zM-3 3h2v1h-2zM2 3h2v1h-2zM-1 4h3v1h-3z"/>
</g>
<polyline points="64.9,499.2 73.8,489.8 77.9,482.0 82.7,470.8 87.4,460.1 89.8,451.8 92.8,441.2 94.3,440.1 97.5,429.4 101.7,410.2 106.0,391.0 109.2,374.0 112.4,356.9 115.6,337.7 118.8,316.4 122.2,303.7 125.4,278.4 129.3,243.7 132.5,220.0 134.1,207.4 138.5,177.4 142.0,161.6 147.5,149.7 153.8,161.6 157.0,177.4 160.9,207.4 163.3,226.0 165.7,246.8 169.6,270.5 171.7,284.0 174.4,267.4 176.7,243.7 178.6,220.0 179.9,207.4 181.8,182.1 185.7,167.9 189.4,182.1 192.5,207.4 193.4,224.0 194.9,243.7 198.0,272.1 201.2,291.0 205.1,308.4 209.9,328.0 216.2,345.8 225.7,364.8 234.4,379.0 243.1,390.0 254.6,402.8 268.8,413.6 283.1,422.5 297.3,430.3 311.5,436.7 325.7,442.4 340.0,447.2 344.6,448.9 358.8,452.5 373.0,456.0 387.3,459.6 401.5,463.1 415.7,465.3 429.9,467.4 440.4,468.8 467.6,474.7 494.9,477.8 522.1,479.5 543.9,480.6" stroke="#000" clip-path="url(#cpl)" shape-rendering="crispEdges"/>
<g stroke="#f00" shape-rendering="crispEdges">
<rect x="60.5" y="473.5" width="8" height="8"/>
<rect x="65.5" y="473.5" width="8" height="8"/>
<rect x="69.5" y="473.5" width="8" height="8"/>
<rect x="74.5" y="472.5" width="8" height="8"/>
<rect x="79.5" y="458.5" width="8" height="8"/>
<rect x="83.5" y="439.5" width="8" height="8"/>
<rect x="88.5" y="431.5" width="8" height="8"/>
<rect x="93.5" y="427.5" width="8" height="8"/>
<rect x="97.5" y="409.5" width="8" height="8"/>
<rect x="102.5" y="383.5" width="8" height="8"/>
<rect x="106.5" y="367.5" width="8" height="8"/>
<rect x="111.5" y="348.5" width="8" height="8"/>
<rect x="116.5" y="310.5" width="8" height="8"/>
<rect x="120.5" y="266.5" width="8" height="8"/>
<rect x="125.5" y="231.5" width="8" height="8"/>
<rect x="129.5" y="203.5" width="8" height="8"/>
<rect x="134.5" y="173.5" width="8" height="8"/>
<rect x="139.5" y="150.5" width="8" height="8"/>
<rect x="143.5" y="147.5" width="8" height="8"/>
<rect x="148.5" y="168.5" width="8" height="8"/>
<rect x="152.5" y="203.5" width="8" height="8"/>
<rect x="157.5" y="236.5" width="8" height="8"/>
<rect x="162.5" y="260.5" width="8" height="8"/>
<rect x="166.5" y="274.5" width="8" height="8"/>
<rect x="171.5" y="256.5" width="8" height="8"/>
<rect x="175.5" y="210.5" width="8" height="8"/>
<rect x="180.5" y="182.5" width="8" height="8"/>
<rect x="185.5" y="199.5" width="8" height="8"/>
<rect x="189.5" y="248.5" width="8" height="8"/>
<rect x="194.5" y="289.5" width="8" height="8"/>
<rect x="198.5" y="301.5" width="8" height="8"/>
<rect x="203.5" y="306.5" width="8" height="8"/>
<rect x="208.5" y="318.5" width="8" height="8"/>
<rect x="212.5" y="335.5" width="8" height="8"/>
<rect x="217.5" y="347.5" width="8" height="8"/>
<rect x="221.5" y="355.5" width="8" height="8"/>
<rect x="226.5" y="364.5" width="8" height="8"/>
<rect x="231.5" y="372.5" width="8" height="8"/>
<rect x="236.5" y="372.5" width="8" height="8"/>
<rect x="240.5" y="372.5" width="8" height="8"/>
<rect x="244.5" y="380.5" width="8" height="8"/>
<rect x="249.5" y="388.5" width="8" height="8"/>
<rect x="254.5" y="391.5" width="8" height="8"/>
<rect x="258.5" y="400.5" width="8" height="8"/>
<rect x="263.5" y="414.5" width="8" height="8"/>
<rect x="267.5" y="413.5" width="8" height="8"/>
<rect x="272.5" y="405.5" width="8" height="8"/>
<rect x="277.5" y="410.5" width="8" height="8"/>
<rect x="281.5" y="422.5" width="8" height="8"/>
<rect x="285.5" y="422.5" width="8" height="8"/>
<rect x="290.5" y="422.5" width="8" height="8"/>
<rect x="294.5" y="431.5" width="8" height="8"/>
<rect x="300.5" y="427.5" width="8" height="8"/>
<rect x="304.5" y="416.5" width="8" height="8"/>
<rect x="309.5" y="413.5" width="8" height="8"/>
<rect x="313.5" y="427.5" width="8" height="8"/>
<rect x="318.5" y="446.5" width="8" height="8"/>
<rect x="323.5" y="450.5" width="8" height="8"/>
<rect x="327.5" y="438.5" width="8" height="8"/>
<rect x="332.5" y="432.5" width="8" height="8"/>
<rect x="336.5" y="435.5" width="8" height="8"/>
<rect x="341.5" y="445.5" width="8" height="8"/>
<rect x="346.5" y="448.5" width="8" height="8"/>
<rect x="351.5" y="444.5" width="8" height="8"/>
<rect x="355.5" y="443.5" width="8" height="8"/>
<rect x="359.5" y="450.5" width="8" height="8"/>
<rect x="364.5" y="452.5" width="8" height="8"/>
<rect x="369.5" y="438.5" width="8" height="8"/>
<rect x="373.5" y="426.5" width="8" height="8"/>
<rect x="378.5" y="432.5" width="8" height="8"/>
<rect x="382.5" y="452.5" width="8" height="8"/>
<rect x="387.5" y="468.5" width="8" height="8"/>
<rect x="392.5" y="468.5" width="8" height="8"/>
<rect x="396.5" y="468.5" width="8" height="8"/>
<rect x="401.5" y="471.5" width="8" height="8"/>
<rect x="405.5" y="470.5" width="8" height="8"/>
<rect x="410.5" y="467.5" width="8" height="8"/>
<rect x="414.5" y="466.5" width="8" height="8"/>
<rect x="419.5" y="464.5" width="8" height="8"/>
<rect x="424.5" y="457.5" width="8" height="8"/>
<rect x="428.5" y="457.5" width="8" height="8"/>
<rect x="432.5" y="459.5" width="8" height="8"/>
<rect x="436.5" y="461.5" width="8" height="8"/>
<rect x="442.5" y="465.5" width="8" height="8"/>
<rect x="447.5" y="474.5" width="8" height="8"/>
<rect x="451.5" y="479.5" width="8" height="8"/>
<rect x="456.5" y="465.5" width="8" height="8"/>
<rect x="461.5" y="458.5" width="8" height="8"/>
<rect x="465.5" y="466.5" width="8" height="8"/>
<rect x="470.5" y="473.5" width="8" height="8"/>
<rect x="474.5" y="468.5" width="8" height="8"/>
<rect x="479.5" y="470.5" width="8" height="8"/>
<rect x="484.5" y="481.5" width="8" height="8"/>
<rect x="488.5" y="475.5" width="8" height="8"/>
<rect x="494.5" y="463.5" width="8" height="8"/>
<rect x="497.5" y="463.5" width="8" height="8"/>
<rect x="502.5" y="476.5" width="8" height="8"/>
<rect x="507.5" y="490.5" width="8" height="8"/>
<rect x="511.5" y="484.5" width="8" height="8"/>
<rect x="516.5" y="465.5" width="8" height="8"/>
<rect x="520.5" y="456.5" width="8" height="8"/>
<rect x="525.5" y="461.5" width="8" height="8"/>
<rect x="529.5" y="472.5" width="8" height="8"/>
<rect x="534.5" y="470.5" width="8" height="8"/>
<rect x="539.5" y="465.5" width="8" height="8"/>
</g>
<polyline points="64.5,499.2 73.4,489.8 77.5,482.0 82.3,470.8 87.0,460.1 89.4,451.8 92.4,441.2 93.9,440.1 97.1,429.4 101.3,410.2 105.6,391.0 108.8,374.0 112.0,356.9 115.2,337.7 118.4,316.4 121.8,303.7 125.0,278.4 128.9,243.7 132.1,220.0 133.7,207.4 138.1,177.4 141.6,161.6 147.1,149.7 153.4,161.6 156.6,177.4 160.5,207.4 162.9,226.0 165.3,246.8 169.2,270.5 171.3,284.0 174.0,267.4 176.3,243.7 178.2,220.0 179.5,207.4 181.4,182.1 185.3,167.9 189.0,182.1 192.1,207.4 193.0,224.0 194.5,243.7 197.6,272.1 200.8,291.0 204.7,308.4 209.5,328.0 215.8,345.8 225.3,364.8 234.0,379.0 242.7,390.0 254.2,402.8 268.4,414.1 282.7,424.1 296.9,431.9 311.1,438.3 325.3,444.0 339.6,448.8 344.2,450.5 358.4,454.1 372.6,457.6 386.9,461.2 401.1,464.7 415.3,466.9 429.5,469.0 440.0,470.4 467.2,475.5 494.5,478.5 521.7,480.2 543.5,481.3" stroke="#f00" clip-path="url(#cpl)" shape-rendering="crispEdges"/>
</g>
<g font-family="Liberation Mono, monospace" font-size="7.80" fill="#000" stroke="#000" stroke-width="0.32" transform="scale(1.1537,1)">
<text y="93.1"><tspan x="528.06">1</tspan><tspan x="542.02">NormUp</tspan><tspan x="598.27">4542.1</tspan><tspan x="645.43">3.1</tspan></text>
<text y="106.0"><tspan x="528.06">2</tspan><tspan x="542.02">BgUp</tspan><tspan x="598.27">204.5</tspan><tspan x="645.43">1.0</tspan></text>
<text y="119.0"><tspan x="528.06">3</tspan><tspan x="542.02">PhaseUp</tspan><tspan x="598.27">18.43</tspan><tspan x="645.43">0.65</tspan></text>
<text y="131.9"><tspan x="528.06">4</tspan><tspan x="542.02">NormDown</tspan><tspan x="598.27">4360.3</tspan><tspan x="645.43">3.0</tspan></text>
<text y="144.8"><tspan x="528.06">5</tspan><tspan x="542.02">BgDown</tspan><tspan x="598.27">217.6</tspan><tspan x="645.43">1.0</tspan></text>
<text y="157.8"><tspan x="528.06">6</tspan><tspan x="542.02">PhaseDown</tspan><tspan x="598.27">199.81</tspan><tspan x="645.43">0.62</tspan></text>
<text y="170.7"><tspan x="528.06">7</tspan><tspan x="542.02">NormRight</tspan><tspan x="598.27">621.1</tspan><tspan x="645.43">1.1</tspan></text>
<text y="183.6"><tspan x="528.06">8</tspan><tspan x="542.02">BgRight</tspan><tspan x="598.27">42.62</tspan><tspan x="645.43">0.38</tspan></text>
<text y="196.5"><tspan x="528.06">9</tspan><tspan x="542.02">PhaseRight</tspan><tspan x="598.27">287.0</tspan><tspan x="645.43">1.4</tspan></text>
<text y="209.5"><tspan x="528.06">10</tspan><tspan x="542.02">AsymSig1</tspan><tspan x="598.27">0.1853</tspan><tspan x="645.43">0.0028</tspan></text>
<text y="222.4"><tspan x="528.06">11</tspan><tspan x="542.02">RateSig1</tspan><tspan x="598.27">2.312</tspan><tspan x="645.43">0.043</tspan></text>
<text y="235.3"><tspan x="528.06">12</tspan><tspan x="542.02">FieldSig1</tspan><tspan x="598.27">101.36</tspan><tspan x="645.43">0.37</tspan></text>
<text y="248.3"><tspan x="528.06">13</tspan><tspan x="542.02">AsymSig2</tspan><tspan x="598.27">0.01716</tspan><tspan x="645.43">0.00098</tspan></text>
<text y="261.2"><tspan x="528.06">14</tspan><tspan x="542.02">RateSig2</tspan><tspan x="598.27">0.514</tspan><tspan x="645.43">0.045</tspan></text>
<text y="274.1"><tspan x="528.06">15</tspan><tspan x="542.02">FieldSig2</tspan><tspan x="598.27">146.32</tspan><tspan x="645.43">0.31</tspan></text>
</g>
<clipPath id="cth"><rect x="604" y="342" width="197" height="228"/></clipPath>
<g clip-path="url(#cth)"><g font-family="Liberation Mono, monospace" font-size="12.50" fill="#000" stroke="#000" stroke-width="0.5" transform="scale(1.1198,1)">
<text y="365.5"><tspan x="544.38">asymmetry</tspan><tspan x="649.39">10</tspan></text>
<text y="376.8"><tspan x="544.38">simplExpo</tspan><tspan x="649.39">11</tspan></text>
<text y="388.7"><tspan x="544.38">TFieldCos</tspan><tspan x="634.39">map1</tspan><tspan x="679.40">fun1</tspan></text>
<text y="399.6"><tspan x="544.38">+</tspan></text>
<text y="410.6"><tspan x="544.38">asymmetry</tspan><tspan x="649.39">13</tspan></text>
<text y="422.3"><tspan x="544.38">simpleGss</tspan><tspan x="649.39">14</tspan></text>
<text y="433.3"><tspan x="544.38">TFieldCos</tspan><tspan x="634.39">map1</tspan><tspan x="679.40">fun2</tspan></text>
<text y="456.2"><tspan x="544.38">fun1</tspan><tspan x="581.88">=</tspan><tspan x="596.89">gamma_mu</tspan><tspan x="664.40">*</tspan><tspan x="679.40">par12</tspan></text>
<text y="468.0"><tspan x="544.38">fun2</tspan><tspan x="581.88">=</tspan><tspan x="596.89">gamma_mu</tspan><tspan x="664.40">*</tspan><tspan x="679.40">par15</tspan></text>
</g></g>
<g font-weight="bold" font-size="9" fill="#000">
<text x="24.5" y="584.1" textLength="386.4" lengthAdjust="spacing">musrfit: 2018-06-30, 13:19:40, chisq = 1329 , NDF = 1145 , chisq/NDF = 1.1606986899563319</text>
<text x="204.3" y="603.2" textLength="385.5" lengthAdjust="spacing">data/deltat_pta_gps_3110,h:3 ,T0=4.50K,T1=4.70K,B=150.00G,E=??,Y124 TF150G 4.5K (ab)</text>
<text x="204.3" y="621.7" textLength="385.5" lengthAdjust="spacing">data/deltat_pta_gps_3110,h:4 ,T0=4.50K,T1=4.70K,B=150.00G,E=??,Y124 TF150G 4.5K (ab)</text>
</g>
<path transform="translate(104,599)" d="M-1 -4h3v1h-3zM-3 -3h2v1h-2zM2 -3h2v1h-2zM-3 -2h1v1h-1zM3 -2h1v1h-1zM-4 -1h1v3h-1zM4 -1h1v3h-1zM-3 2h1v1h-1zM3 2h1v1h-1zM-3 3h2v1h-2zM2 3h2v1h-2zM-1 4h3v1h-3z" fill="#000" shape-rendering="crispEdges"/>

<rect x="100.5" y="614.5" width="8" height="8" fill="none" stroke="#f00" stroke-width="1"/>
</svg>
</body></html>
